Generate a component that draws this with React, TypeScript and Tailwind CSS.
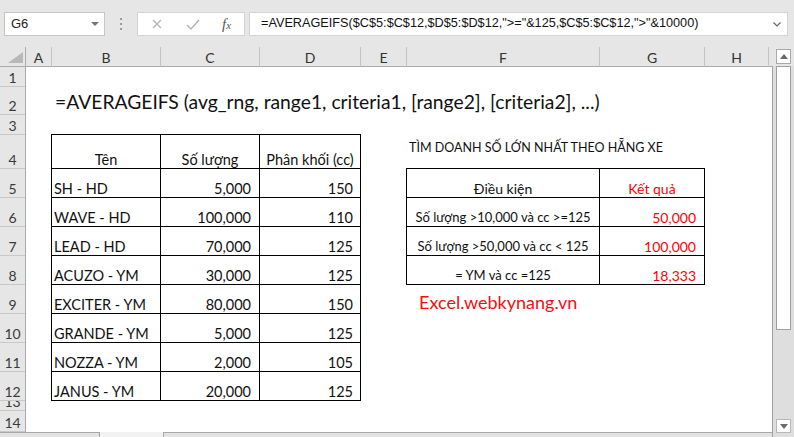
import React from "react";

const CELL_FONT = { fontFamily: "Lato, 'Noto Sans', sans-serif" };

const colLetters = ["A", "B", "C", "D", "E", "F", "G", "H"];
const colHeaderW = [
  "w-[26px]",
  "w-[109px]",
  "w-[99px]",
  "w-[101px]",
  "w-[46px]",
  "w-[193px]",
  "w-[105px]",
  "w-[64px]",
];

const rowHeaders: { n: string; h: string }[] = [
  { n: "1", h: "h-[20px]" },
  { n: "2", h: "h-[28px]" },
  { n: "3", h: "h-[20px]" },
  { n: "4", h: "h-[34px]" },
  { n: "5", h: "h-[29px]" },
  { n: "6", h: "h-[29px]" },
  { n: "7", h: "h-[29px]" },
  { n: "8", h: "h-[29px]" },
  { n: "9", h: "h-[29px]" },
  { n: "10", h: "h-[29px]" },
  { n: "11", h: "h-[29px]" },
  { n: "12", h: "h-[29px]" },
  { n: "13", h: "h-[10px]" },
  { n: "14", h: "h-[21px]" },
];

const data = [
  ["SH - HD", "5,000", "150"],
  ["WAVE - HD", "100,000", "110"],
  ["LEAD - HD", "70,000", "125"],
  ["ACUZO - YM", "30,000", "125"],
  ["EXCITER - YM", "80,000", "150"],
  ["GRANDE - YM", "5,000", "125"],
  ["NOZZA - YM", "2,000", "105"],
  ["JANUS - YM", "20,000", "125"],
];

const conditions = [
  ["Số lượng >10,000 và cc >=125", "50,000"],
  ["Số lượng >50,000 và cc < 125", "100,000"],
  ["= YM và cc =125", "18,333"],
];

function Toolbar() {
  return (
    <div className="h-[47px] flex items-start pt-[12px] pl-[4px]">
      <div className="w-[101px] h-[24px] bg-white border border-[#c6c6c6] flex items-center justify-between pl-[6px] pr-[5px]">
        <span
          className="text-[13px] text-[#222]"
          style={{ fontFamily: "'Liberation Sans', Arial, sans-serif" }}
        >
          G6
        </span>
        <svg width="8" height="5" viewBox="0 0 8 5">
          <path d="M0 0 L8 0 L4 4 Z" fill="#777" />
        </svg>
      </div>
      <div className="w-[32px] h-[24px] flex flex-col items-center justify-center gap-[3px]">
        <div className="w-[2px] h-[2px] bg-[#9a9a9a]" />
        <div className="w-[2px] h-[2px] bg-[#9a9a9a]" />
        <div className="w-[2px] h-[2px] bg-[#9a9a9a]" />
      </div>
      <div className="w-[108px] h-[24px] bg-white border border-[#d4d4d4] flex items-center">
        <svg width="10" height="10" viewBox="0 0 10 10" className="ml-[14px]">
          <path d="M1 1 L9 9 M9 1 L1 9" stroke="#b5b5b5" strokeWidth="1.3" />
        </svg>
        <svg width="14" height="11" viewBox="0 0 14 11" className="ml-[24px]">
          <path d="M1 6 L5 10 L13 1" stroke="#b5b5b5" strokeWidth="1.4" fill="none" />
        </svg>
        <span
          className="ml-[22px] italic text-[15px] text-[#555] leading-none"
          style={{ fontFamily: "'Liberation Serif', 'Times New Roman', serif" }}
        >
          f<span className="text-[11px]">x</span>
        </span>
      </div>
      <div className="ml-[4px] w-[539px] h-[24px] bg-white border border-[#d4d4d4] flex items-center justify-between pl-[11px] pr-[6px]">
        <span
          className="text-[12.7px] text-[#111] whitespace-nowrap"
          style={{ fontFamily: "'Liberation Sans', Arial, sans-serif" }}
        >
          =AVERAGEIFS($C$5:$C$12,$D$5:$D$12,"&gt;="&amp;125,$C$5:$C$12,"&gt;"&amp;10000)
        </span>
        <svg width="8" height="5" viewBox="0 0 8 5">
          <path d="M0.5 0.5 L4 4 L7.5 0.5" stroke="#666" strokeWidth="1.2" fill="none" />
        </svg>
      </div>
    </div>
  );
}

function ColumnHeaders() {
  return (
    <div className="h-[20px] flex" style={CELL_FONT}>
      <div className="w-[26px] h-full border-r border-b border-[#ababab] relative">
        <svg width="16" height="12" viewBox="0 0 16 12" className="absolute left-[8px] top-[5px]">
          <path d="M15 0 L15 11 L0 11 Z" fill="#b8b8b8" />
        </svg>
      </div>
      {colLetters.map((l, i) => (
        <div
          key={l}
          className={`${colHeaderW[i]} h-full border-r border-b border-[#c4c4c4] border-b-[#ababab] flex items-center justify-center text-[14px] text-[#333] pt-[1px]`}
        >
          {l}
        </div>
      ))}
      <div className="w-[3px] h-full border-b border-[#ababab]" />
    </div>
  );
}

function RowHeaders() {
  return (
    <div className="w-[26px] flex flex-col border-r border-[#ababab]" style={CELL_FONT}>
      {rowHeaders.map((r) => (
        <div
          key={r.n}
          className={`${r.h} border-b border-[#c8c8c8] flex items-end justify-center overflow-hidden text-[14px] leading-[17px] text-[#3a3a3a]`}
        >
          {r.n}
        </div>
      ))}
    </div>
  );
}

function Cells() {
  return (
    <div
      className="w-[746px] bg-white grid grid-cols-[26px_109px_99px_101px_46px_193px_105px_64px_3px] grid-rows-[20px_28px_20px_34px_29px_29px_29px_29px_29px_29px_29px_29px_10px_21px] text-[#111]"
      style={CELL_FONT}
    >
      <div className="col-start-2 col-span-8 row-start-2 flex items-end pl-[3px] whitespace-nowrap text-[19.3px] leading-[22px] pb-[2px]">
        =AVERAGEIFS (avg_rng, range1, criteria1, [range2], [criteria2], ...)
      </div>

      <div className="col-start-2 col-span-3 row-start-4 row-span-9 -ml-px -mt-px border-l border-t border-black grid grid-cols-[109px_99px_101px] grid-rows-[34px_29px_29px_29px_29px_29px_29px_29px_29px] text-[14.5px] leading-[17px]">
        <div className="border-r border-b border-black flex items-end justify-center">Tên</div>
        <div className="border-r border-b border-black flex items-end justify-center">Số lượng</div>
        <div className="border-r border-b border-black flex items-end justify-center whitespace-nowrap">
          Phân khối (cc)
        </div>
        {data.map((r) => (
          <React.Fragment key={r[0]}>
            <div className="border-r border-b border-black flex items-end pl-[2px] whitespace-nowrap">{r[0]}</div>
            <div className="border-r border-b border-black flex items-end justify-end pr-[8px]">{r[1]}</div>
            <div className="border-r border-b border-black flex items-end justify-end pr-[7px]">{r[2]}</div>
          </React.Fragment>
        ))}
      </div>

      <div className="col-start-6 col-span-3 row-start-4 flex items-start pl-[2px] pt-[5px] whitespace-nowrap text-[12.5px] leading-[16px]">
        TÌM DOANH SỐ LỚN NHẤT THEO HẴNG XE
      </div>

      <div className="col-start-6 col-span-2 row-start-5 row-span-4 -ml-px -mt-px border-l border-t border-black grid grid-cols-[193px_105px] grid-rows-[29px_29px_29px_29px] text-[14px] leading-[17px]">
        <div className="border-r border-b border-black flex items-end justify-center">Điều kiện</div>
        <div className="border-r border-b border-black flex items-end justify-center text-[#ff0000]">Kết quả</div>
        {conditions.map((c) => (
          <React.Fragment key={c[0]}>
            <div className="border-r border-b border-black flex items-end justify-center whitespace-nowrap text-[13px]">{c[0]}</div>
            <div className="border-r border-b border-black flex items-end justify-end pr-[8px] text-[#ff0000]">{c[1]}</div>
          </React.Fragment>
        ))}
      </div>

      <div className="col-start-6 col-span-3 row-start-9 flex items-end pl-[12px] pb-[1px] whitespace-nowrap text-[18px] leading-[22px] text-[#f01010]">
        Excel.webkynang.vn
      </div>
    </div>
  );
}

function Scrollbar() {
  return (
    <div className="w-[22px] h-[390px] flex flex-col">
      <div className="h-[19px] flex items-start pt-[2px] pl-[4px]">
        <div className="w-[15px] h-[15px] bg-white border border-[#a8a8a8] flex items-center justify-center">
          <svg width="8" height="5" viewBox="0 0 8 5">
            <path d="M0 5 L8 5 L4 0 Z" fill="#6a6a6a" />
          </svg>
        </div>
      </div>
      <div className="flex-1 border-l border-[#a0a0a0] bg-[#dedede] flex flex-col pl-[3px]">
        <div className="w-[15px] h-[264px] bg-white border border-[#a0a0a0]" />
        <div className="flex-1" />
        <div className="w-[15px] h-[14px] mb-[4px] bg-white border border-[#b8b8b8] flex items-center justify-center">
          <svg width="8" height="5" viewBox="0 0 8 5">
            <path d="M0 0 L8 0 L4 5 Z" fill="#6a6a6a" />
          </svg>
        </div>
      </div>
    </div>
  );
}

export default function App() {
  return (
    <div className="w-[794px] h-[437px] overflow-hidden bg-[#e6e6e6]">
      <Toolbar />
      <div className="flex">
        <div className="w-[772px] flex flex-col">
          <ColumnHeaders />
          <div className="flex">
            <RowHeaders />
            <Cells />
          </div>
          <div className="h-[6px] flex bg-[#f2f2f2]">
            <div className="w-[100px] h-full border-t border-r border-[#a8a8a8] bg-[#e2e2e2]" />
            <div className="w-[63px]" />
            <div className="flex-1 h-full border-t border-l border-[#a8a8a8] bg-[#e2e2e2]" />
          </div>
        </div>
        <Scrollbar />
      </div>
    </div>
  );
}
